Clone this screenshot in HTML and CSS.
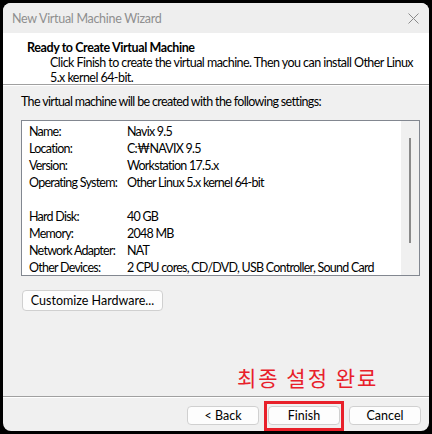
FILE: index.html
```html
<!DOCTYPE html>
<html lang="en">
<head>
<meta charset="utf-8">
<title>New Virtual Machine Wizard</title>
<link rel="stylesheet" href="styles.css">
</head>
<body>
<div class="window">
  <div class="titlebar">
    <span class="title">New Virtual Machine Wizard</span>
    <svg class="close" width="11" height="11" viewBox="0 0 11 11"><path d="M0.5 0.5 L10.5 10.5 M10.5 0.5 L0.5 10.5" stroke="#8a8a8a" stroke-width="1" fill="none"/></svg>
  </div>
  <div class="header">
    <div class="h-title">Ready to Create Virtual Machine</div>
    <div class="h-desc">Click Finish to create the virtual machine. Then you can install Other Linux<br>5.x kernel 64-bit.</div>
  </div>
  <div class="content">
    <div class="intro">The virtual machine will be created with the following settings:</div>
    <div class="box">
      <div class="rows">
        <div class="row"><span class="lbl">Name:</span><span class="val">Navix 9.5</span></div>
        <div class="row"><span class="lbl">Location:</span><span class="val">C:₩NAVIX 9.5</span></div>
        <div class="row"><span class="lbl">Version:</span><span class="val">Workstation 17.5.x</span></div>
        <div class="row"><span class="lbl">Operating System:</span><span class="val">Other Linux 5.x kernel 64-bit</span></div>
        <div class="row"></div>
        <div class="row"><span class="lbl">Hard Disk:</span><span class="val">40 GB</span></div>
        <div class="row"><span class="lbl">Memory:</span><span class="val">2048 MB</span></div>
        <div class="row"><span class="lbl">Network Adapter:</span><span class="val">NAT</span></div>
        <div class="row"><span class="lbl">Other Devices:</span><span class="val">2 CPU cores, CD/DVD, USB Controller, Sound Card</span></div>
      </div>
      <div class="scroll"><div class="thumb"></div></div>
    </div>
    <button class="btn custom">Customize Hardware...</button>
    <div class="note">최종 설정 완료</div>
  </div>
  <div class="footer">
    <button class="btn nav">&lt; Back</button>
    <div class="mark"><button class="btn nav">Finish</button></div>
    <button class="btn nav">Cancel</button>
  </div>
</div>
</body>
</html>
```
FILE: styles.css
```css
html, body {
  margin: 0;
  padding: 0;
  background: #000;
}
body {
  width: 432px;
  height: 434px;
  overflow: hidden;
  font-family: Lato, "Noto Sans", sans-serif;
  font-size: 12.5px;
  letter-spacing: -0.55px;
  color: #000;
}
.window {
  margin: 3px 3px 0 3px;
  width: 426px;
  height: 428px;
  background: #f0f0f0;
  border-radius: 8px;
  overflow: hidden;
  display: flex;
  flex-direction: column;
}
.titlebar {
  height: 30px;
  flex: none;
  background: #eeeeee;
  display: flex;
  align-items: center;
  justify-content: space-between;
  padding: 0 10px 0 9px;
}
.title {
  color: #8f8f8f;
  letter-spacing: -0.3px;
}
.close {
  display: block;
}
.header {
  height: 52px;
  flex: none;
  background: #fff;
  border-bottom: 1px solid #a0a0a0;
  box-shadow: 0 1px 0 #fff;
  padding: 7px 0 0 24px;
  box-sizing: border-box;
  white-space: nowrap;
}
.h-title {
  font-weight: 700;
  line-height: 15px;
  letter-spacing: -0.4px;
}
.h-desc {
  margin-left: 23px;
  line-height: 15px;
}
.content {
  flex: 1;
  padding: 8px 10px 0 18px;
  display: flex;
  flex-direction: column;
  align-items: flex-start;
  margin-top: 1px;
}
.intro {
  line-height: 16px;
  white-space: nowrap;
  letter-spacing: -0.65px;
}
.box {
  margin-top: 10px;
  width: 399px;
  height: 156px;
  box-sizing: border-box;
  border: 1px solid #828790;
  background: #fff;
  display: flex;
}
.rows {
  flex: 1;
  padding: 2px 0 0 7px;
  letter-spacing: -0.75px;
}
.row {
  height: 17px;
  line-height: 17px;
  display: flex;
  white-space: nowrap;
}
.lbl {
  width: 98px;
  flex: none;
}
.scroll {
  width: 18px;
  background: #f0f0f0;
}
.thumb {
  margin: 17px 0 0 8px;
  width: 2px;
  height: 105px;
  background: #8a8a8a;
}
.btn {
  font: inherit;
  color: #000;
  background: #fdfdfd;
  border: 1px solid #d0d0d0;
  border-radius: 4px;
  padding: 0;
  box-sizing: border-box;
}
.custom {
  margin: 14px 0 0 1px;
  width: 141px;
  height: 21px;
}
.note {
  margin: 55px 0 0 216px;
  color: #e8202a;
  font-family: "Noto Sans CJK KR", sans-serif;
  font-size: 21px;
  line-height: 23px;
  letter-spacing: 2px;
}
.footer {
  height: 35px;
  flex: none;
  border-top: 1px solid #a0a0a0;
  box-shadow: inset 0 1px 0 #fff;
  display: flex;
  justify-content: flex-end;
  align-items: flex-start;
  gap: 9px;
  padding: 9px 8px 0 0;
  box-sizing: border-box;
}
.nav {
  width: 72px;
  height: 19px;
}
.mark {
  position: relative;
}
.mark::after {
  content: "";
  position: absolute;
  left: -4px;
  top: -5px;
  right: -4px;
  bottom: -6px;
  border: 3px solid #e8202a;
  pointer-events: none;
}
```
